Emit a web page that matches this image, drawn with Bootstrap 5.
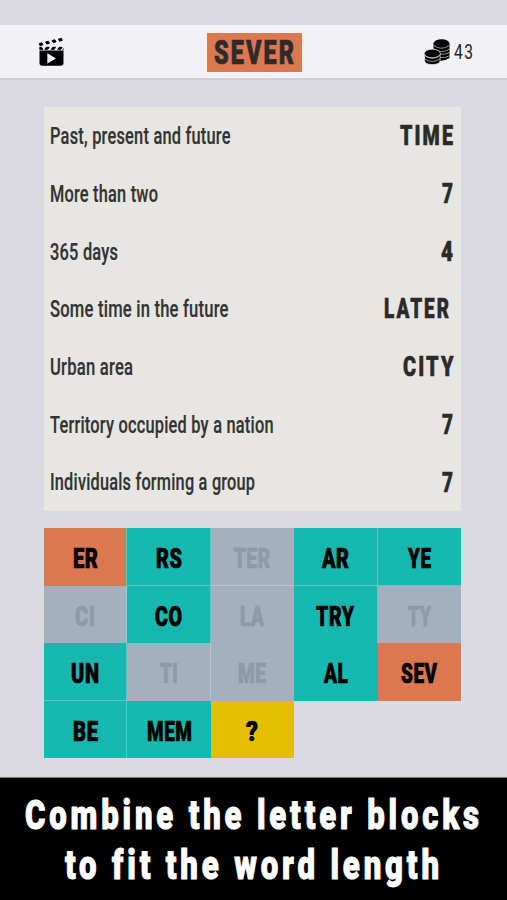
<!DOCTYPE html>
<html lang="en">
<head>
<meta charset="utf-8">
<meta name="viewport" content="width=device-width, initial-scale=1">
<title>Word Blocks</title>
<link href="https://cdn.jsdelivr.net/npm/bootstrap@5.3.0/dist/css/bootstrap.min.css" rel="stylesheet">
<style>
  body { background: #dbdae0; font-family: Roboto, "Liberation Sans", sans-serif; height: 900px; overflow: hidden; }
  .topbar { margin-top: 25px; height: 55px; background: #f2f1f5; border-bottom: 2px solid #d0cfd5; padding: 1px 34px 0 38px; display: grid; grid-template-columns: 1fr auto 1fr; }
  .guess { width: 95px; height: 39px; margin-left: -2px; background: #db7850; color: #302b2b; font-size: 33px; font-weight: 900; --ls: 3px; -webkit-text-stroke: .7px; padding: 1px 1px 0 0; }
  .coins { font-size: 20px; color: #222; font-weight: 400; --ls: 2px; }
  .clues { margin: 27px 46px 0 44px; height: 404px; background: #e7e6e2; color: #333; }
  .clue-row { flex: 1 1 0; padding: 0 8px 0 6px; }
  .clue { font-size: 23px; font-weight: 500; --ls: .3px; padding-top: 2px; -webkit-text-stroke: .2px; }
  .answer { font-size: 27.7px; font-weight: 900; color: #2b2a29; --ls: 3px; -webkit-text-stroke: .6px; }
  .board { margin: 17px 46px 0 44px; height: 230px; display: grid; grid-template: repeat(4, 1fr) / repeat(5, 1fr); color: #000; font-size: 27.7px; font-weight: 900; --ls: .8px; -webkit-text-stroke: .7px; }
  .tile { background: #17b8b0; padding-top: 4px; border: 0 solid #5fc6c4; }
  .tile.hot { background: #db7850; }
  .tile.used { background: #a3b0bf; color: #8e9aa7; border-color: #b9c3cf; }
  .tile.hint { background: #e3bf00; }
  .tile.bb { border-bottom-width: 1px; padding-top: 5px; }
  .tile.be { border-right-width: 1px; }
  .caption-bar { margin-top: 19px; height: 123px; background: #000; color: #fff; border-top: 1px solid #777; font-size: 40.5px; font-weight: 900; --ls: 5px; padding: 12px 3px 0 0; -webkit-text-stroke: 1px; }
  .caption-line { height: 50.5px; }
  .fit { display: inline-block; white-space: nowrap; line-height: 1.2; }
  .fit > span { display: inline-block; letter-spacing: var(--ls); transform-origin: 0 50%; }
</style>
<script src="https://cdn.jsdelivr.net/npm/bootstrap@5.3.0/dist/js/bootstrap.bundle.min.js"></script>
</head>
<body>
<header class="topbar align-items-center">
  <svg width="27" height="29" viewBox="0 0 27 29" aria-label="Watch video">
    <path d="M1.500 12.500h24v12.500q0 2.800-2.800 2.800h-18.400q-2.800 0-2.800-2.800z"/>
    <path d="M9.300 15.300v10.200l8.700-5.100z" fill="#f2f1f5"/>
    <g stroke="#000" stroke-width="1" stroke-linejoin="round">
      <path d="M1.800 9.300h1.800l1.300 2h-3.100zM8.300 9.300h2.900l-1.500 2h-2.900zM14.800 9.300h2.900l-1.500 2h-2.900zM21.200 9.300h2.900l-1.500 2h-2.900z"/>
      <path d="M1.300 5.500l2.600-.7 1 2-2.900.9zM7.600 4l2.700-.7 1.200 2-2.700.8zM14.100 2.500l2.700-.7 1.300 2-2.700.8zM20.600 1l2.900-.6.8 2-2.900.8z"/>
    </g>
    <path d="M25.500 9.800v2h-1.500z"/>
  </svg>
  <div class="guess d-flex justify-content-center align-items-center"><span class="fit" data-w="80">SEVER</span></div>
  <div class="coins d-flex justify-content-end align-items-center gap-1">
    <svg width="26" height="26" viewBox="0 0 26 26" aria-label="Coins">
      <path d="M9.500 4.500v16q8 3.500 16-1.500V4.500z"/>
      <ellipse cx="17.500" cy="4.500" rx="8" ry="4.300"/>
      <path d="M9.700 6.500q7.800 5.500 15.800 0M10 10q8 5 15.500 0M15 15q6 1 10.500-1.500M16 18.500q6 .5 9.500-1.700" fill="none" stroke="#f2f1f5" stroke-width=".6"/>
      <path d="M.5 14.500v7q0 4 7.800 4t7.800-4v-7z" stroke="#f2f1f5" stroke-width=".7"/>
      <ellipse cx="8.300" cy="14.500" rx="8" ry="4.300" stroke="#f2f1f5" stroke-width=".7"/>
      <path d="M.7 16.500q7.600 5.500 15.200 0M.7 20q7.600 5 15.200 0" fill="none" stroke="#f2f1f5" stroke-width=".6"/>
    </svg>
    <span class="fit" data-w="19">43</span>
  </div>
</header>

<main>
  <section class="clues d-flex flex-column">
    <div class="clue-row d-flex justify-content-between align-items-center"><span class="clue fit" data-w="180.500">Past, present and future</span><span class="answer fit" data-w="53">TIME</span></div>
    <div class="clue-row d-flex justify-content-between align-items-center"><span class="clue fit" data-w="108">More than two</span><span class="answer fit" data-w="11">7</span></div>
    <div class="clue-row d-flex justify-content-between align-items-center"><span class="clue fit" data-w="68">365 days</span><span class="answer fit" data-w="12">4</span></div>
    <div class="clue-row d-flex justify-content-between align-items-center"><span class="clue fit" data-w="178.500">Some time in the future</span><span class="answer fit me-1" data-w="65">LATER</span></div>
    <div class="clue-row d-flex justify-content-between align-items-center"><span class="clue fit" data-w="83">Urban area</span><span class="answer fit" data-w="50.500">CITY</span></div>
    <div class="clue-row d-flex justify-content-between align-items-center"><span class="clue fit" data-w="223.500">Territory occupied by a nation</span><span class="answer fit" data-w="11">7</span></div>
    <div class="clue-row d-flex justify-content-between align-items-center"><span class="clue fit" data-w="205">Individuals forming a group</span><span class="answer fit" data-w="11">7</span></div>
  </section>

  <section class="board">
    <div class="tile hot be d-flex justify-content-center align-items-center"><span class="fit" data-w="25">ER</span></div>
    <div class="tile be bb d-flex justify-content-center align-items-center"><span class="fit" data-w="26">RS</span></div>
    <div class="tile used bb d-flex justify-content-center align-items-center"><span class="fit" data-w="36">TER</span></div>
    <div class="tile be bb d-flex justify-content-center align-items-center"><span class="fit" data-w="27">AR</span></div>
    <div class="tile bb d-flex justify-content-center align-items-center"><span class="fit" data-w="23">YE</span></div>

    <div class="tile used be d-flex justify-content-center align-items-center"><span class="fit" data-w="20">CI</span></div>
    <div class="tile be d-flex justify-content-center align-items-center"><span class="fit" data-w="27">CO</span></div>
    <div class="tile used d-flex justify-content-center align-items-center"><span class="fit" data-w="24">LA</span></div>
    <div class="tile be d-flex justify-content-center align-items-center"><span class="fit" data-w="38">TRY</span></div>
    <div class="tile used d-flex justify-content-center align-items-center"><span class="fit" data-w="23">TY</span></div>

    <div class="tile be bb d-flex justify-content-center align-items-center"><span class="fit" data-w="28">UN</span></div>
    <div class="tile used be d-flex justify-content-center align-items-center"><span class="fit" data-w="18">TI</span></div>
    <div class="tile used d-flex justify-content-center align-items-center"><span class="fit" data-w="28">ME</span></div>
    <div class="tile d-flex justify-content-center align-items-center"><span class="fit" data-w="24">AL</span></div>
    <div class="tile hot d-flex justify-content-center align-items-center"><span class="fit" data-w="36">SEV</span></div>

    <div class="tile be d-flex justify-content-center align-items-center"><span class="fit" data-w="25">BE</span></div>
    <div class="tile d-flex justify-content-center align-items-center"><span class="fit" data-w="45">MEM</span></div>
    <div class="tile hint d-flex justify-content-center align-items-center"><span class="fit" data-w="12">?</span></div>
  </section>
</main>

<footer class="caption-bar">
  <div class="caption-line d-flex justify-content-center align-items-center"><span class="fit" data-w="454">Combine the letter blocks</span></div>
  <div class="caption-line d-flex justify-content-center align-items-center"><span class="fit" data-w="374">to fit the word length</span></div>
</footer>

<script>
  // Condense each label horizontally to its set width.
  document.querySelectorAll('.fit').forEach(function (el) {
    var inner = document.createElement('span');
    inner.textContent = el.textContent;
    el.replaceChildren(inner);
    var gap = parseFloat(getComputedStyle(inner).letterSpacing) || 0;
    var natural = inner.getBoundingClientRect().width;
    var scale = el.dataset.w / (natural - gap);
    el.style.width = el.dataset.w + 'px';
    inner.style.marginRight = (el.dataset.w - natural) + 'px';
    inner.style.transform = 'scaleX(' + scale + ')';
  });
</script>
</body>
</html>
